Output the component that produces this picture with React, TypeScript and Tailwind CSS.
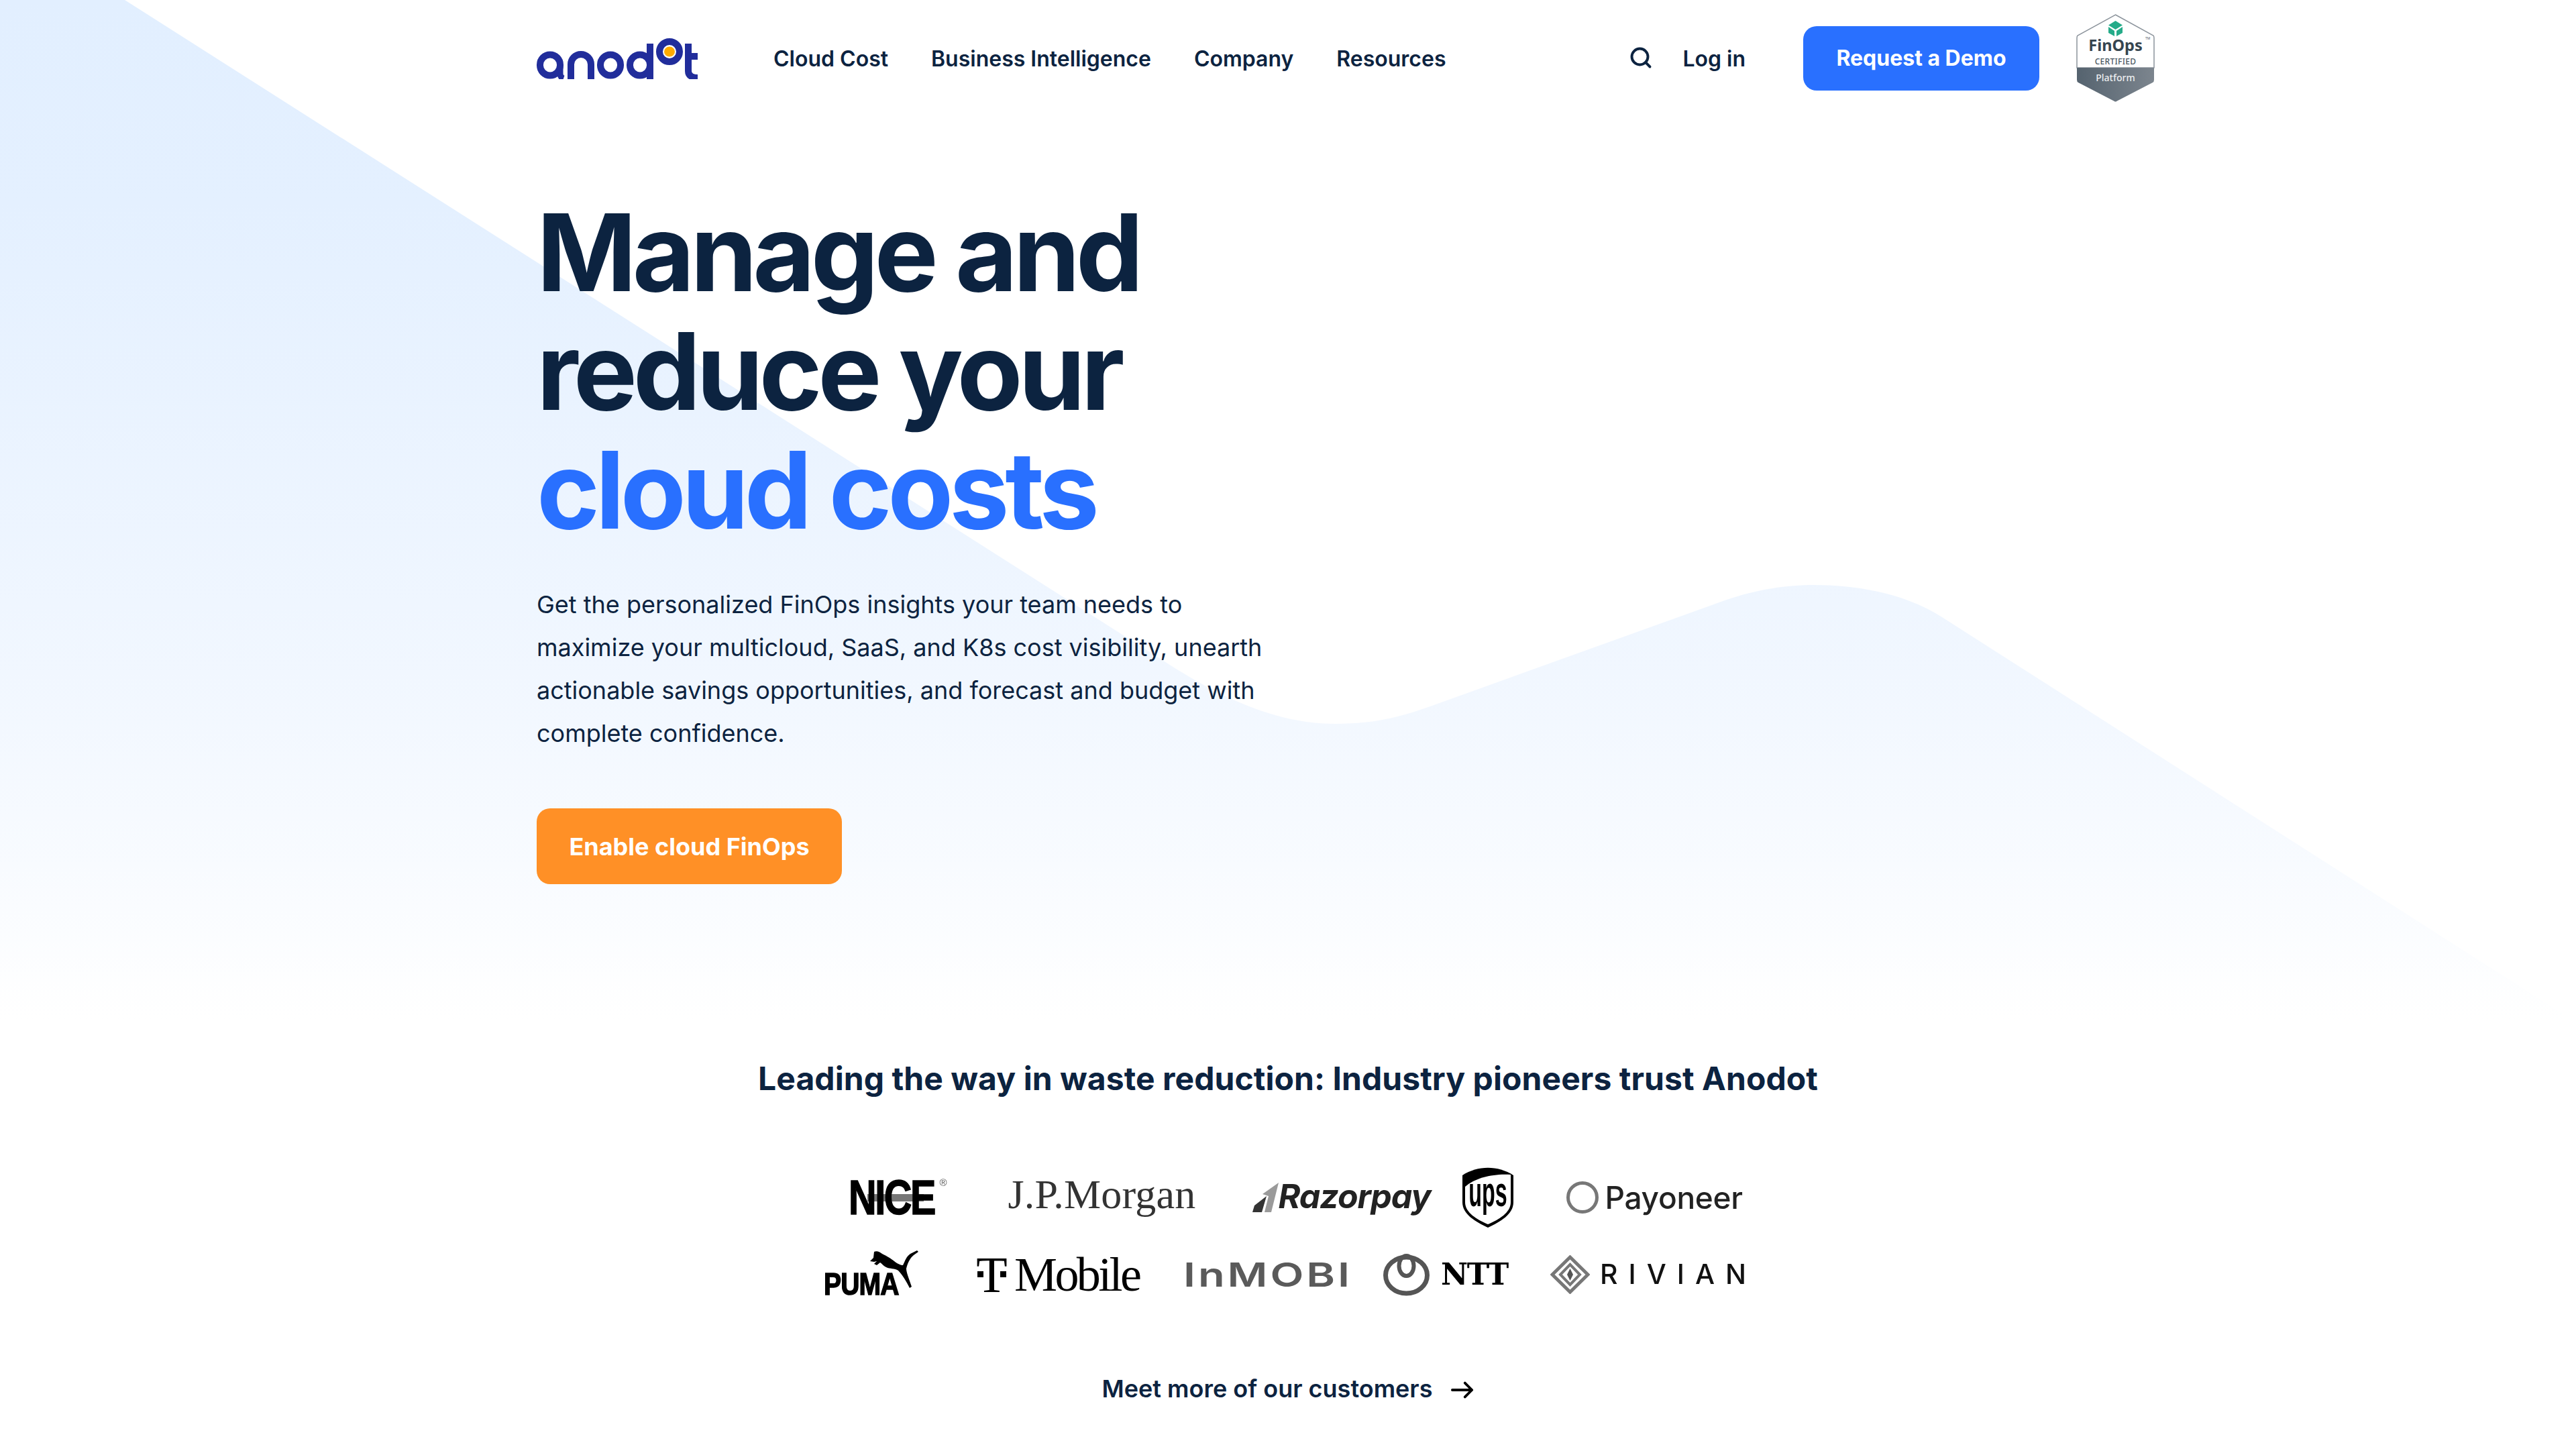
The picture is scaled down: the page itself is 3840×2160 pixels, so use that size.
import { FC } from 'react';
import { Search } from 'lucide-react';

const Backdrop: FC = () => (
  <svg className="absolute left-0 top-0 w-[3840px] h-[1600px]" viewBox="0 0 3840 1600" fill="none">
    <defs>
      <linearGradient id="hero-fade" gradientUnits="userSpaceOnUse" x1="0" y1="0" x2="0" y2="1520">
        <stop offset="0" stopColor="#e2efff" />
        <stop offset="0.2" stopColor="#e4f0ff" />
        <stop offset="0.66" stopColor="#f1f7ff" />
        <stop offset="0.85" stopColor="#f8fbff" />
        <stop offset="1" stopColor="#ffffff" />
      </linearGradient>
    </defs>
    <path
      d="M0 0 L186 0 L1750 995 C1850 1058 1925 1079 1991 1079 C2050 1079 2090 1068 2132 1053 L2571 895 C2620 878 2665 872 2704 872 C2770 872 2840 885 2895 920 L3840 1524 L0 1524 Z"
      fill="url(#hero-fade)"
    />
  </svg>
);

const AnodotLogo: FC = () => (
  <svg width="241" height="61" viewBox="0 0 241 61" fill="none" stroke="#212d9b" strokeWidth="10">
    <rect x="5" y="24.5" width="30" height="31" rx="15" />
    <path d="M35 40 V53 C35 57 37 59 40 60" strokeWidth="9" />
    <path d="M51 61 V39 a15 15 0 0 1 30 0 V61" />
    <rect x="95" y="24.5" width="30" height="31" rx="15" />
    <rect x="139" y="24.5" width="30" height="31" rx="15" />
    <path d="M169 8 V61" />
    <rect x="183" y="5" width="30" height="30" rx="15" />
    <ellipse cx="198" cy="20" rx="8" ry="7.5" fill="#ffab00" stroke="none" />
    <path d="M226 8 V49 C226 56 232 59 240 59 M226 27 H240" />
  </svg>
);

const FinOpsBadge: FC = () => (
  <svg width="117" height="132" viewBox="0 0 117 132" fontFamily="'Noto Sans', sans-serif">
    <defs>
      <linearGradient id="badge-band" x1="0" x2="1" y1="0" y2="0">
        <stop offset="0" stopColor="#55636f" />
        <stop offset="1" stopColor="#7c858e" />
      </linearGradient>
    </defs>
    <path d="M58.5 1 L115 32 Q116 33 116 36 V80 H1 V36 Q1 33 2 32 Z" fill="#fff" stroke="#8c949c" strokeWidth="1.5" />
    <path d="M1 80 H116 V98 Q116 101 114 102 L60 130 Q58.5 131 57 130 L3 102 Q1 101 1 98 Z" fill="url(#badge-band)" />
    <path d="M58.5 10 L69 16.5 L58.5 23 L48 16.5 Z" fill="#25ab89" />
    <path d="M48 19 L57 25 V33 L48 28 Z M69 19 L60 25 V33 L69 28 Z" fill="#25ab89" />
    <text x="58.5" y="55" textAnchor="middle" fontSize="23.5" fontWeight="700" fill="#36454f">FinOps</text>
    <text x="58.5" y="75" textAnchor="middle" fontSize="12" fontWeight="500" letterSpacing="0.3" fill="#4a5762">CERTIFIED</text>
    <text x="58.5" y="100" textAnchor="middle" fontSize="14" fontWeight="500" fill="#eceef0">Platform</text>
    <text x="103" y="38" fontSize="5" fill="#4a5762">TM</text>
  </svg>
);

const NiceLogo: FC = () => (
  <div className="relative w-[147px] h-[60px] flex items-center">
    <div className="absolute left-[28px] top-[25px] w-[84px] h-[11px] bg-[#777777]" />
    <span className="relative block font-['Liberation_Sans'] font-bold text-[72px] leading-none tracking-[-3px] text-black [-webkit-text-stroke:1.5px_#000] scale-x-[0.8] origin-left">
      NICE
    </span>
    <span className="absolute right-0 top-0 text-[15px] leading-none text-[#555555] font-['Liberation_Sans']">®</span>
  </div>
);

const RazorpayLogo: FC = () => (
  <div className="w-[264px] flex items-center">
    <svg width="39" height="44" viewBox="0 0 39 44" className="shrink-0">
      <path d="M0 44 L3 34 L21 20 L14 44 Z" fill="#333333" />
      <path d="M18 44 L24 20 L15 17 L39 0 L28 44 Z" fill="#9a9a9a" />
    </svg>
    <span className="font-['Inter'] italic font-bold text-[50px] leading-none tracking-[-1px] text-[#222222] -mt-[4px]">Razorpay</span>
  </div>
);

const UpsLogo: FC = () => (
  <svg width="78" height="90" viewBox="0 0 78 90" fill="none">
    <path d="M1 12 C24 -3 54 -3 77 12 V52 C77 70 58 81 39 90 C20 81 1 70 1 52 Z" fill="#000" />
    <path d="M5 29 C20 15 50 9 73 11 V52 C73 68 55 78 39 85 C23 78 5 68 5 52 Z" fill="#fff" />
    <text x="0" y="0" transform="translate(39 58) scale(0.62 1.2)" textAnchor="middle" fontFamily="'Liberation Sans', sans-serif" fontWeight="700" fontSize="52" fill="#000">ups</text>
  </svg>
);

const PayoneerLogo: FC = () => (
  <div className="w-[261px] flex items-center gap-[10px]">
    <div className="w-[48px] h-[48px] rounded-full border-[5px] border-[#777777] shrink-0" />
    <span className="font-['Inter'] font-medium text-[46px] leading-none tracking-[-0.3px] text-[#222222]">Payoneer</span>
  </div>
);

const PumaLogo: FC = () => (
  <div className="relative w-[141px] h-[72px]">
    <svg width="72" height="56" viewBox="0 0 72 56" className="absolute right-0 top-0" fill="#000">
      <path d="M0 16 L5 11 L6 2 C10 0 14 2 18 5 C26 9 31 12 36 16 C41 20 46 22 49 22 C52 16 54 9 60 5 L70 0 L72 2 L65 7 C59 12 56 19 54 27 C54 33 58 42 62 54 L59 56 C54 46 48 36 42 30 C36 26 30 28 24 25 C21 24 18 20 15 18 L10 22 L6 20 L10 16 L6 17 Z" />
    </svg>
    <span className="absolute left-0 bottom-[4px] font-['Liberation_Sans'] font-bold text-[46px] leading-[36px] tracking-[-1px] text-black [-webkit-text-stroke:1.5px_#000] scale-x-[0.85] origin-left">
      PUMA
    </span>
  </div>
);

const TMobileLogo: FC = () => (
  <div className="w-[243px] flex items-center gap-[12px] font-['Liberation_Serif'] text-black">
    <div className="relative w-[43px] h-[52px] flex justify-center">
      <span className="text-[76px] leading-[52px]">T</span>
      <div className="absolute left-0 top-[21px] w-[9px] h-[9px] bg-black" />
      <div className="absolute right-0 top-[21px] w-[9px] h-[9px] bg-black" />
    </div>
    <span className="text-[72px] leading-none tracking-[-3.6px]">Mobile</span>
  </div>
);

const InmobiLogo: FC = () => (
  <div className="w-[243px]">
    <span className="block font-['Inter'] font-semibold text-[50px] leading-none tracking-[3px] text-[#5a5a5a] scale-x-[1.3] origin-left whitespace-nowrap">
      InMOBI
    </span>
  </div>
);

const NttLogo: FC = () => (
  <div className="w-[183px] flex items-center gap-[17px]">
    <svg width="69" height="64" viewBox="0 0 69 64" fill="none" stroke="#555555" className="shrink-0">
      <ellipse cx="34.5" cy="33" rx="31" ry="27" strokeWidth="7" />
      <ellipse cx="34.5" cy="19" rx="11" ry="15" strokeWidth="6" />
    </svg>
    <span className="font-['DejaVu_Serif'] font-bold text-[44px] leading-none tracking-[-1.5px] text-black">NTT</span>
  </div>
);

const RivianLogo: FC = () => (
  <div className="w-[291px] flex items-center gap-[15px]">
    <svg width="59" height="58" viewBox="0 0 59 58" fill="none" className="shrink-0">
      <path d="M29.5 3 L56 29 L29.5 55 L3 29 Z" stroke="#777777" strokeWidth="5" />
      <path d="M29.5 14 L44 29 L29.5 44 L15 29 Z" stroke="#777777" strokeWidth="4" />
      <path d="M29.5 20 L34 29 L29.5 38 L25 29 Z" fill="#555555" />
    </svg>
    <span className="font-['Inter'] font-medium text-[41px] leading-none tracking-[16px] text-[#111111] whitespace-nowrap">RIVIAN</span>
  </div>
);

const JpMorganLogo: FC = () => (
  <span className="w-[281px] -mt-[10px] font-['Liberation_Serif'] text-[62px] leading-none tracking-[0.2px] text-[#333333] whitespace-nowrap">
    J.P.Morgan
  </span>
);

const navItems = ['Cloud Cost', 'Business Intelligence', 'Company', 'Resources'];

export default function App() {
  return (
    <div className="relative w-[3840px] h-[2160px] overflow-hidden bg-white font-['Inter'] text-[#0c2340]">
      <Backdrop />

      <div className="relative w-[2420px] ml-[800px]">
        <header className="flex items-center h-[174px]">
          <AnodotLogo />
          <nav className="flex gap-[64px] ml-[112px] mt-[2px] text-[32px] font-semibold">
            {navItems.map((item) => (
              <a key={item}>{item}</a>
            ))}
          </nav>
          <div className="ml-auto flex items-center">
            <Search className="w-[36px] h-[36px] -mt-[2px] ml-[2px]" strokeWidth={2.6} />
            <a className="ml-[44px] mt-[2px] text-[32px] font-semibold">Log in</a>
            <a className="ml-[86px] w-[352px] h-[96px] rounded-[20px] bg-[#2970ff] flex items-center justify-center text-white text-[32px] font-bold">
              Request a Demo
            </a>
            <div className="ml-[55px] mr-[8px]">
              <FinOpsBadge />
            </div>
          </div>
        </header>

        <section className="pt-[114px]">
          <h1 className="text-[160px] leading-[177px] font-bold tracking-[-6.4px]">
            Manage and
            <br />
            reduce your
            <br />
            <span className="text-[#2970ff]">cloud costs</span>
          </h1>
          <p className="mt-[50px] w-[1100px] text-[36px] leading-[64px]">
            Get the personalized FinOps insights your team needs to maximize your multicloud, SaaS, and K8s cost
            visibility, unearth actionable savings opportunities, and forecast and budget with complete confidence.
          </p>
          <a className="mt-[80px] w-[455px] h-[113px] rounded-[20px] bg-[#ff9026] flex items-center justify-center text-white text-[36px] font-bold">
            Enable cloud FinOps
          </a>
        </section>
      </div>

      <section className="relative flex flex-col items-center mt-[260px]">
        <h2 className="text-[48px] leading-[60px] font-bold tracking-[0.07px]">
          Leading the way in waste reduction: Industry pioneers trust Anodot
        </h2>
        <div className="flex flex-col items-center mt-[102px] blur-[0.6px]">
          <div className="flex items-center h-[90px] pl-[20px]">
            <NiceLogo />
            <div className="w-[91px]" />
            <JpMorganLogo />
            <div className="w-[83px]" />
            <RazorpayLogo />
            <div className="w-[48px]" />
            <UpsLogo />
            <div className="w-[78px]" />
            <PayoneerLogo />
          </div>
          <div className="flex items-center h-[75px] mt-[32px] pr-[10px]">
            <PumaLogo />
            <div className="w-[88px]" />
            <TMobileLogo />
            <div className="w-[64px]" />
            <InmobiLogo />
            <div className="w-[55px]" />
            <NttLogo />
            <div className="w-[66px]" />
            <RivianLogo />
          </div>
        </div>
        <a className="mt-[108px] flex items-center gap-[28px] text-[36px] leading-[50px] font-semibold">
          Meet more of our customers
          <svg width="34" height="26" viewBox="0 0 36 26" fill="none" stroke="#000" strokeWidth="4" strokeLinecap="round" strokeLinejoin="round" className="mt-[4px]">
            <path d="M2 13 H33 M22 2 L33 13 L22 24" />
          </svg>
        </a>
      </section>
    </div>
  );
}
